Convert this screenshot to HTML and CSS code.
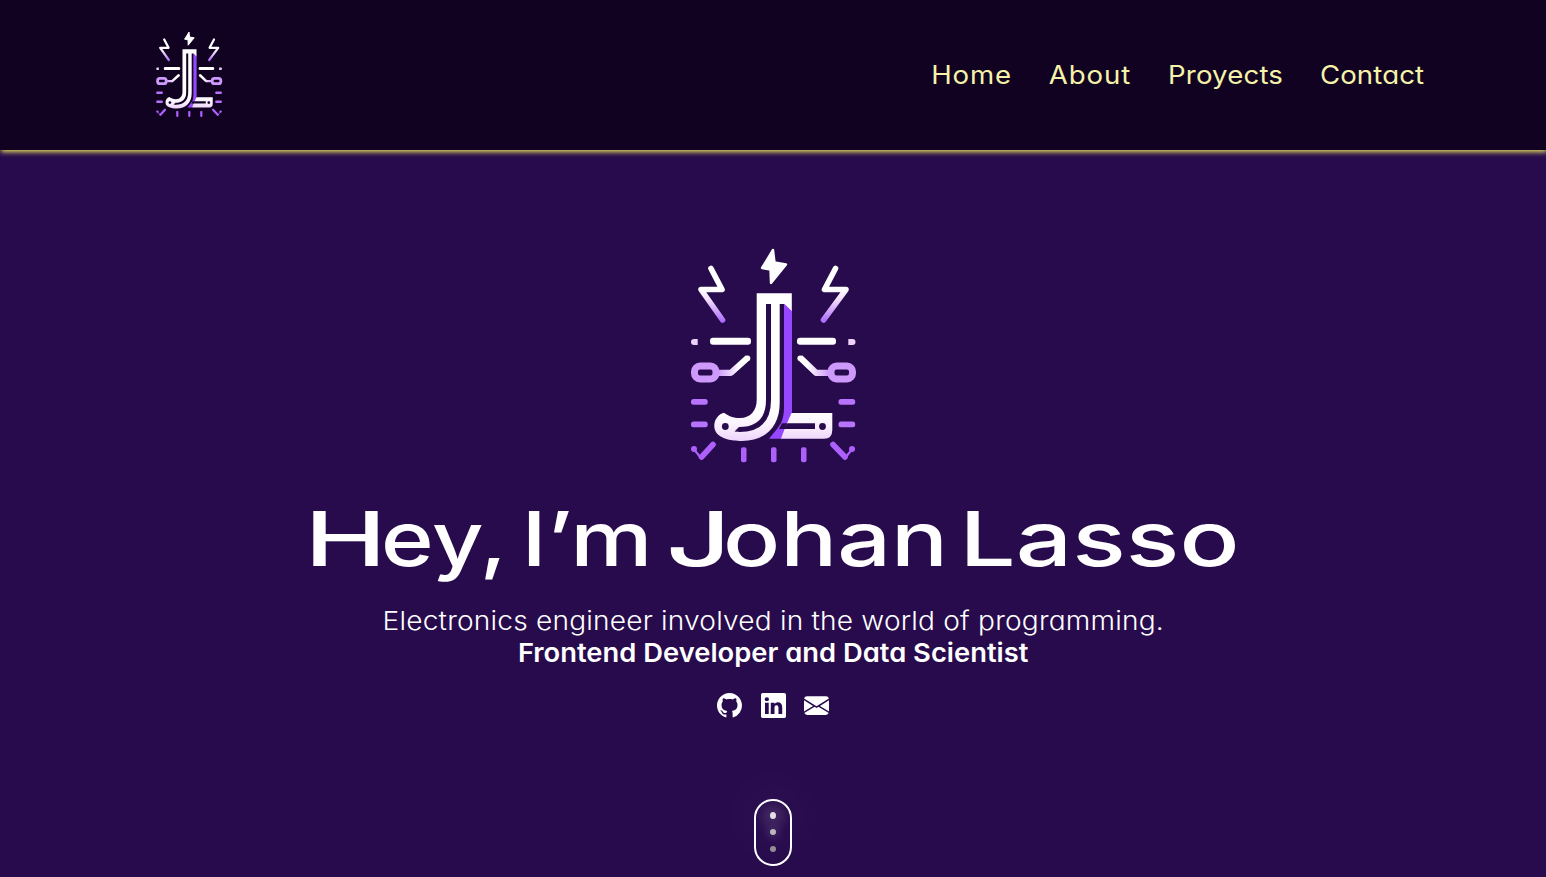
FILE: index.html
```html
<!DOCTYPE html>
<html lang="en">
<head>
<meta charset="utf-8">
<title>Johan Lasso</title>
<link rel="stylesheet" href="styles.css">
</head>
<body>
<svg class="defs" width="0" height="0" aria-hidden="true">
  <defs>
    <linearGradient id="bolt" gradientUnits="userSpaceOnUse" x1="0" y1="290" x2="0" y2="323"><stop offset="0" stop-color="#fff"/><stop offset=".3" stop-color="#f3dcfa"/><stop offset="1" stop-color="#a763fb"/></linearGradient>
    <linearGradient id="armL" gradientUnits="userSpaceOnUse" x1="718" y1="0" x2="740" y2="0"><stop offset="0" stop-color="#cf9bfa"/><stop offset="1" stop-color="#fff"/></linearGradient>
    <linearGradient id="armR" gradientUnits="userSpaceOnUse" x1="829" y1="0" x2="807" y2="0"><stop offset="0" stop-color="#cf9bfa"/><stop offset="1" stop-color="#fff"/></linearGradient>
    <linearGradient id="foot" gradientUnits="userSpaceOnUse" x1="0" y1="412" x2="0" y2="441"><stop offset="0" stop-color="#fff"/><stop offset=".5" stop-color="#faeffd"/><stop offset="1" stop-color="#ecd3fa"/></linearGradient>
    <symbol id="logo" viewBox="648 230 250 250">
      <path fill="#fff" stroke="#fff" stroke-width="2.400" stroke-linejoin="round" d="M773 250 762 268 770.500 269.500 771 283 786 264.500 774.500 262.500Z"/>
      <g fill="none" stroke="url(#bolt)" stroke-width="5.600" stroke-linecap="round" stroke-linejoin="round">
        <path d="M711 268.500 722 289.500H701L722.500 320"/>
        <path d="M835.500 268.500 824.500 289.500H846L823.500 320"/>
      </g>
      <g fill="#fff"><rect x="710" y="337.700" width="41" height="7" rx="3"/><rect x="797" y="337.700" width="39" height="7" rx="3"/></g>
      <path fill="#efd0fa" d="M697.700 339v6H694a3 3 0 0 1 0-6ZM848.300 339v6H852.500a3 3 0 0 0 0-6Z"/>
      <g fill="none" stroke-width="6.200" stroke-linejoin="round">
        <path stroke="url(#armL)" d="M717 372.800H731L748 357.500"/>
        <path stroke="url(#armR)" d="M830 372.800H816L800 357.500"/>
      </g>
      <g fill="#fff"><circle cx="747.500" cy="358.300" r="2.800"/><circle cx="800.200" cy="358.300" r="2.800"/></g>
      <g fill="none" stroke="#cd99fb" stroke-width="7"><rect x="694.500" y="366" width="21.500" height="13" rx="5.500"/><rect x="831" y="366" width="21.500" height="13" rx="5.500"/></g>
      <g fill="#b773fb">
        <rect x="691" y="399" width="16.700" height="5.800" rx="2.500"/><rect x="838.500" y="399" width="16.700" height="5.800" rx="2.500"/>
        <rect x="691" y="421.500" width="16.700" height="5.800" rx="2.500"/><rect x="838.500" y="421.500" width="16.700" height="5.800" rx="2.500"/>
      </g>
      <g fill="#ad60fc"><rect x="741" y="447.300" width="5.500" height="15" rx="2"/><rect x="771" y="447.300" width="5.500" height="15" rx="2"/><rect x="801" y="447.300" width="5.500" height="15" rx="2"/><circle cx="694" cy="449" r="3"/><circle cx="852" cy="449" r="3"/></g>
      <g fill="none" stroke="#ad60fc" stroke-linecap="round" stroke-linejoin="round">
        <path stroke-width="5.600" d="M701.500 457 713 444.500M845 457 833 444.500"/>
        <path stroke-width="2.200" d="M694.500 450 701 458M851.500 450 845 458"/>
      </g>
      <path fill="#9747ff" d="M784 302 792 310V412L788 423 784.500 429 782 438.700H769L777 429 781 423C783 419 784 413 784 408Z"/>
      <path fill="url(#foot)" d="M791.500 413H832.300V430Q832.300 438.700 824 438.700H781L784.500 429H815V423.300H787Z"/>
      <path fill="url(#foot)" d="M756.700 293.300H791.800V311L784.500 304H779.700V403C779.700 427 765 441 742 441 730 441 714.300 438 714.300 426 714.300 420 718 414 724 412.700 729 416 733 418 740 418 751 418 756.700 410 756.700 400Z"/>
      <g class="logo-cut"><path class="logo-channel" d="M768.500 304V400C768.500 421 757 429.500 739 429.500"/><path class="logo-fill" d="M739 427 734.500 431.500 741 432Z"/><path class="logo-fill" d="M779 429H785L787.500 423.300H782Z"/><circle class="logo-fill" cx="725.300" cy="426.500" r="3.400"/><circle class="logo-fill" cx="822.500" cy="426.500" r="3.400"/></g>
    </symbol>
  </defs>
</svg>

<header class="header">
  <svg class="header-logo" role="img" aria-label="JL"><use href="#logo"/></svg>
  <nav class="nav">
    <a class="home">Home</a><a class="about">About</a><a class="projects">Proyects</a><a class="contact">Contact</a>
  </nav>
</header>

<main class="hero">
  <svg class="hero-logo" role="img" aria-label="JL"><use href="#logo"/></svg>
  <h1 class="title">
    <svg class="title-art" viewBox="306 490 936 100">
      <text y="566"><tspan x="304.500" textLength="82" lengthAdjust="spacingAndGlyphs">H</tspan><tspan x="381" textLength="126" lengthAdjust="spacingAndGlyphs">ey,</tspan></text>
      <text x="521.500" y="566" textLength="131" lengthAdjust="spacingAndGlyphs">I’m</text>
      <text y="566"><tspan x="666" textLength="65" lengthAdjust="spacingAndGlyphs">J</tspan><tspan x="723" textLength="225" lengthAdjust="spacingAndGlyphs">ohan</tspan></text>
      <text x="959.500" y="566" textLength="280" lengthAdjust="spacingAndGlyphs">Lasso</text>
    </svg>
  </h1>
  <p class="intro"><span class="line">Electronics engineer involved in the world of programming.</span><strong class="line role">Frontend Developer and Data Scientist</strong></p>
  <div class="social">
    <svg viewBox="0 0 16 16"><path d="M8 0C3.580 0 0 3.580 0 8c0 3.540 2.290 6.530 5.470 7.590.4.070.55-.17.55-.38 0-.19-.01-.82-.01-1.490-2.010.37-2.530-.49-2.690-.94-.09-.23-.48-.94-.82-1.130-.28-.15-.68-.52-.01-.53.63-.01 1.080.58 1.230.82.72 1.210 1.870.87 2.330.66.07-.52.28-.87.51-1.070-1.780-.2-3.640-.89-3.640-3.950 0-.87.31-1.590.82-2.150-.08-.2-.36-1.020.08-2.120 0 0 .67-.21 2.200.82.64-.18 1.320-.27 2-.27s1.360.09 2 .27c1.530-1.040 2.200-.82 2.200-.82.44 1.100.16 1.920.08 2.120.51.56.82 1.270.82 2.150 0 3.070-1.870 3.750-3.650 3.950.29.25.54.73.54 1.480 0 1.070-.01 1.930-.01 2.200 0 .21.15.46.55.38A8.010 8.010 0 0 0 16 8c0-4.420-3.580-8-8-8"/></svg>
    <svg viewBox="0 0 16 16"><path d="M0 1.146C0 .513.526 0 1.175 0h13.650C15.474 0 16 .513 16 1.146v13.708c0 .633-.526 1.146-1.175 1.146H1.175C.526 16 0 15.487 0 14.854zm4.943 12.248V6.169H2.542v7.225zm-1.200-8.212c.837 0 1.358-.554 1.358-1.248-.015-.709-.52-1.248-1.342-1.248S2.400 3.226 2.400 3.934c0 .694.521 1.248 1.327 1.248zm4.908 8.212V9.359c0-.216.016-.432.08-.586.173-.431.568-.878 1.232-.878.869 0 1.216.662 1.216 1.634v3.865h2.401V9.250c0-2.220-1.184-3.252-2.764-3.252-1.274 0-1.845.7-2.165 1.193v.025h-.016l.016-.025V6.169h-2.400c.03.678 0 7.225 0 7.225z"/></svg>
    <svg viewBox="0 0 16 16"><path d="M.05 3.555A2 2 0 0 1 2 2h12a2 2 0 0 1 1.950 1.555L8 8.414zM0 4.697v7.104l5.803-3.558zM6.761 8.830l-6.570 4.027A2 2 0 0 0 2 14h12a2 2 0 0 0 1.808-1.144l-6.570-4.027L8 9.586zm3.436-.586L16 11.801V4.697z"/></svg>
  </div>
  <div class="scroll"><i class="dot first"></i><i class="dot second"></i><i class="dot third"></i></div>
</main>
</body>
</html>
```
FILE: styles.css
```css
* { box-sizing: border-box; }
body {
  --page: #280b4d;
  margin: 0;
  height: 877px;
  overflow: hidden;
  background: var(--page);
  color: #fff;
  font-family: Inter, "Noto Sans", sans-serif;
  font-feature-settings: "cv11";
}
.defs { display: block; height: 0; }
.header {
  --page: #120221;
  position: relative;
  display: flex;
  align-items: center;
  justify-content: space-between;
  height: 150px;
  padding: 0 122px 0 139px;
  background: var(--page);
  box-shadow: 1px 2px 5px #e8e15f;
}
.header-logo { width: 100px; height: 100px; margin-bottom: 2px; }
.nav {
  display: flex;
  gap: 34px;
  color: #f5f3a9;
  font-size: 25.5px;
  line-height: 32px;
  transform: scaleX(1.083);
  transform-origin: right center;
}
.nav a { white-space: nowrap; }
.home { letter-spacing: .75px; }
.about { letter-spacing: .85px; }
.projects { letter-spacing: .15px; }
.contact { letter-spacing: .1px; }
.logo-channel { fill: none; stroke: var(--page); stroke-width: 5px; }
.logo-fill { fill: var(--page); }
.hero { display: flex; flex-direction: column; align-items: center; padding-top: 80px; }
.hero-logo { width: 250px; height: 250px; flex: none; }
.title { margin: 10px 0 0; width: 936px; height: 100px; }
.title-art {
  display: block;
  width: 936px;
  height: 100px;
  overflow: visible;
  margin-left: 1px;
  fill: #fff;
  font: 500 75.5px Inter, sans-serif;
  font-feature-settings: normal;
}
.intro { margin: 14px 0 0; display: flex; flex-direction: column; align-items: center; font-size: 26px; line-height: 32px; font-weight: 300; }
.line { display: block; white-space: nowrap; letter-spacing: .18px; transform: translate(.5px, .5px) scaleX(1.08); }
.role { font-weight: 600; letter-spacing: 0; transform: translate(.5px, .5px) scaleX(1.052); }
.social { display: flex; gap: 18.6px; margin-top: 25px; }
.social svg { width: 25px; height: 25px; fill: #fff; }
.scroll {
  display: flex;
  flex-direction: column;
  align-items: center;
  gap: 10.3px;
  width: 38px;
  height: 67px;
  margin-top: 81px;
  padding-top: 11px;
  border: 2px solid #fff;
  border-radius: 19px;
}
.dot { width: 6px; height: 6px; flex: none; border-radius: 50%; }
.first { height: 7px; background: #e2e0e3; box-shadow: 0 0 15px 3px rgba(255,255,255,.38), 0 0 60px 25px rgba(255,255,255,.04); }
.second { background: #bab8bc; box-shadow: 0 0 10px 1px rgba(255,255,255,.25); }
.third { background: #918f93; }
```
